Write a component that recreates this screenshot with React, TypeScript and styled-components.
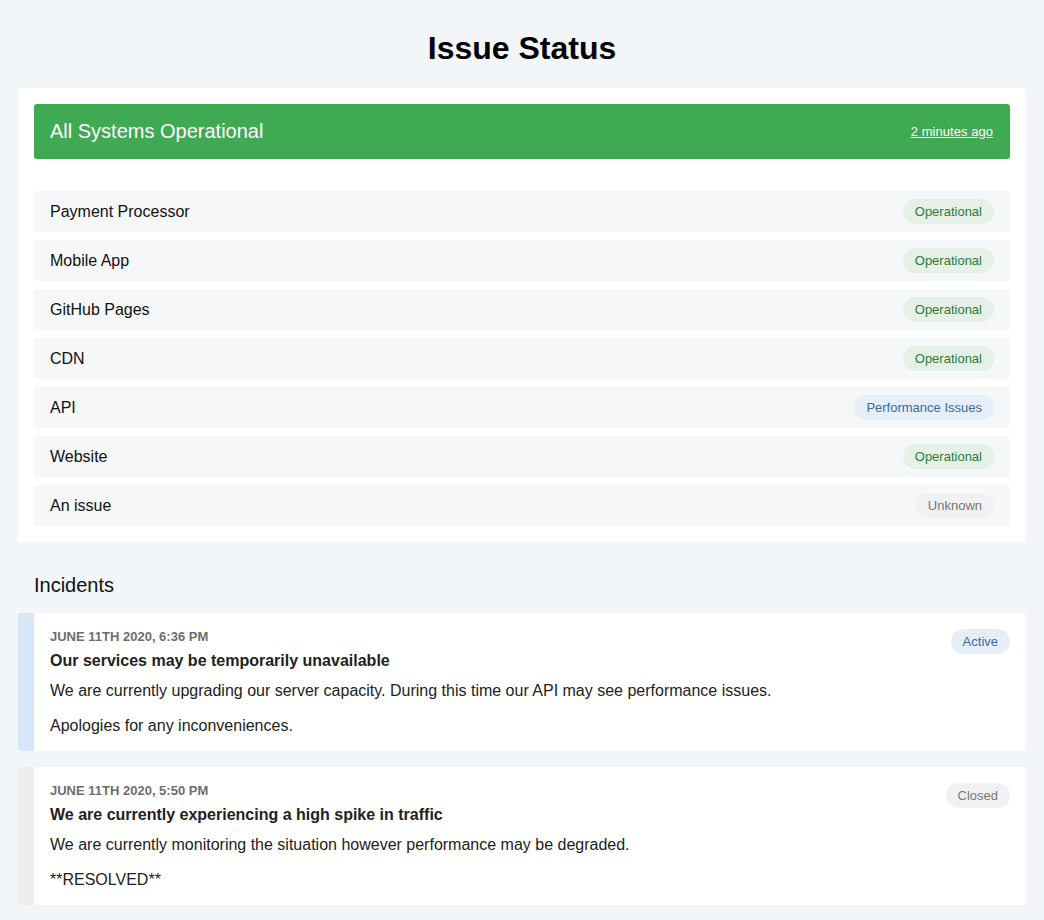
import React from "react";
import styled, { createGlobalStyle } from "styled-components";

const GlobalStyle = createGlobalStyle`
  html, body {
    margin: 0;
    padding: 0;
    background: #f3f6f9;
    font-family: "Liberation Sans", Arial, Helvetica, sans-serif;
    color: #111;
  }
  * { box-sizing: border-box; }
`;

const Page = styled.div`
  padding: 0 18px 16px;
  min-height: 920px;
  background: #f3f6f9;
`;

const Title = styled.h1`
  margin: 0;
  padding: 30px 0 21px;
  text-align: center;
  font-size: 32px;
  line-height: 37px;
  font-weight: 700;
  color: #000;
`;

const Panel = styled.section`
  background: #fff;
  border-radius: 3px;
  padding: 16px;
  display: flex;
  flex-direction: column;
`;

const Banner = styled.div`
  height: 55px;
  background: #3fa954;
  border-radius: 3px;
  display: flex;
  align-items: center;
  justify-content: space-between;
  padding: 0 17px 0 16px;
  color: #fff;
`;

const BannerTitle = styled.span`
  font-size: 20px;
`;

const BannerLink = styled.a`
  font-size: 13px;
  letter-spacing: 0.05px;
  color: #fff;
  text-decoration: underline;
  cursor: pointer;
`;

const ServiceList = styled.ul`
  list-style: none;
  margin: 32px 0 0;
  padding: 0;
  display: flex;
  flex-direction: column;
  gap: 8px;
`;

const ServiceRow = styled.li`
  height: 41px;
  background: #f5f7f9;
  border-radius: 3px;
  display: flex;
  align-items: center;
  justify-content: space-between;
  padding: 0 16px;
  font-size: 16px;
  color: #111;
`;

type Tone = "green" | "blue" | "gray";

const toneColors: Record<Tone, { bg: string; fg: string }> = {
  green: { bg: "#e5f1e7", fg: "#2d7a3c" },
  blue: { bg: "#e6eef8", fg: "#3b6aa0" },
  gray: { bg: "#f0f1f2", fg: "#777" },
};

const Badge = styled.span<{ $tone: Tone }>`
  flex: none;
  display: inline-flex;
  align-items: center;
  height: 25px;
  padding: 0 12px;
  border-radius: 13px;
  font-size: 13px;
  background: ${(p) => toneColors[p.$tone].bg};
  color: ${(p) => toneColors[p.$tone].fg};
`;

const SectionHeading = styled.h2`
  margin: 32px 0 16px;
  padding: 0 16px;
  font-size: 20px;
  line-height: 23px;
  font-weight: 400;
  color: #111;
`;

const IncidentList = styled.div`
  display: flex;
  flex-direction: column;
  gap: 16px;
`;

const IncidentCard = styled.article<{ $accent: string }>`
  background: #fff;
  border-radius: 3px;
  border-left: 16px solid ${(p) => p.$accent};
  padding: 16px;
  display: flex;
  align-items: flex-start;
  gap: 16px;
`;

const IncidentBody = styled.div`
  flex: 1;
  display: flex;
  flex-direction: column;
`;

const IncidentDate = styled.div`
  font-size: 13px;
  line-height: 15px;
  font-weight: 700;
  text-transform: uppercase;
  color: #6e6e6e;
`;

const IncidentTitle = styled.h3`
  margin: 8px 0 0;
  font-size: 16px;
  font-weight: 700;
  color: #222;
`;

const IncidentText = styled.p`
  margin: 12px 0 0;
  font-size: 16px;
  color: #222;
  & + & {
    margin-top: 17px;
  }
`;

const services: { name: string; status: string; tone: Tone }[] = [
  { name: "Payment Processor", status: "Operational", tone: "green" },
  { name: "Mobile App", status: "Operational", tone: "green" },
  { name: "GitHub Pages", status: "Operational", tone: "green" },
  { name: "CDN", status: "Operational", tone: "green" },
  { name: "API", status: "Performance Issues", tone: "blue" },
  { name: "Website", status: "Operational", tone: "green" },
  { name: "An issue", status: "Unknown", tone: "gray" },
];

const incidents = [
  {
    date: "June 11th 2020, 6:36 pm",
    title: "Our services may be temporarily unavailable",
    paragraphs: [
      "We are currently upgrading our server capacity. During this time our API may see performance issues.",
      "Apologies for any inconveniences.",
    ],
    state: "Active",
    tone: "blue" as Tone,
    accent: "#d8e7f8",
  },
  {
    date: "June 11th 2020, 5:50 pm",
    title: "We are currently experiencing a high spike in traffic",
    paragraphs: [
      "We are currently monitoring the situation however performance may be degraded.",
      "**RESOLVED**",
    ],
    state: "Closed",
    tone: "gray" as Tone,
    accent: "#eeeeee",
  },
];

export default function App() {
  return (
    <>
      <GlobalStyle />
      <Page>
        <Title>Issue Status</Title>
        <Panel>
          <Banner>
            <BannerTitle>All Systems Operational</BannerTitle>
            <BannerLink>2 minutes ago</BannerLink>
          </Banner>
          <ServiceList>
            {services.map((s) => (
              <ServiceRow key={s.name}>
                <span>{s.name}</span>
                <Badge $tone={s.tone}>{s.status}</Badge>
              </ServiceRow>
            ))}
          </ServiceList>
        </Panel>
        <SectionHeading>Incidents</SectionHeading>
        <IncidentList>
          {incidents.map((i) => (
            <IncidentCard key={i.date} $accent={i.accent}>
              <IncidentBody>
                <IncidentDate>{i.date}</IncidentDate>
                <IncidentTitle>{i.title}</IncidentTitle>
                {i.paragraphs.map((p) => (
                  <IncidentText key={p}>{p}</IncidentText>
                ))}
              </IncidentBody>
              <Badge $tone={i.tone}>{i.state}</Badge>
            </IncidentCard>
          ))}
        </IncidentList>
      </Page>
    </>
  );
}
